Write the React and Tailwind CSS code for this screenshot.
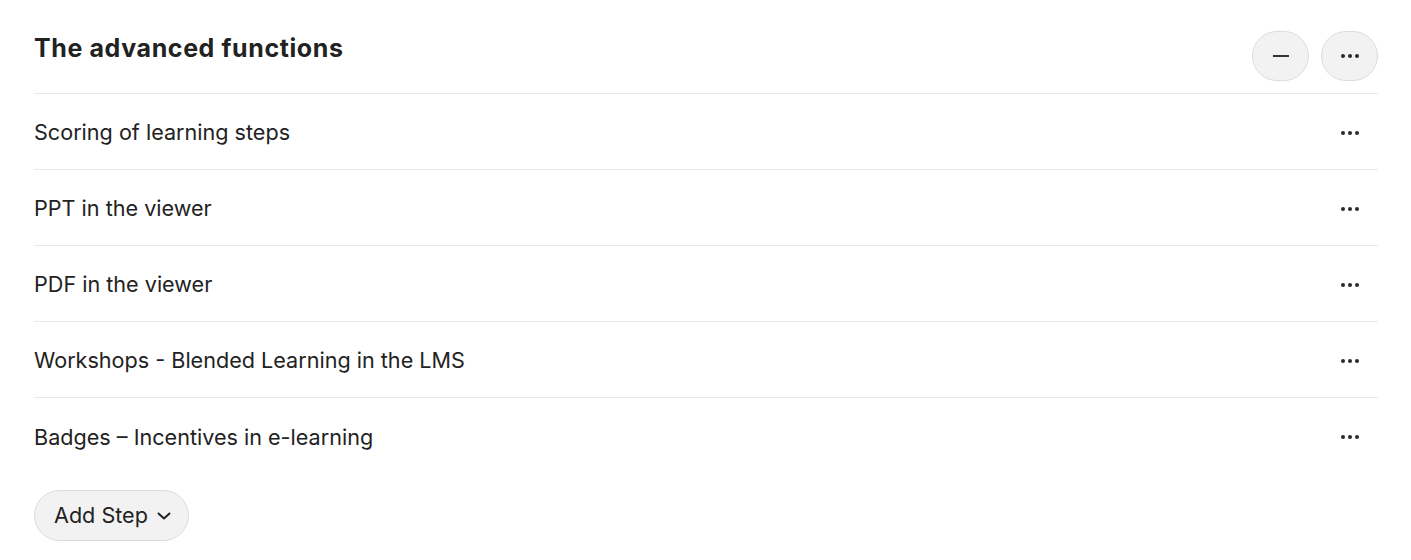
import React from 'react';

const steps = [
  'Scoring of learning steps',
  'PPT in the viewer',
  'PDF in the viewer',
  'Workshops - Blended Learning in the LMS',
  'Badges – Incentives in e-learning',
];

function Dots() {
  return (
    <svg width="18" height="4" viewBox="0 0 18 4" fill="#2a2a2a">
      <circle cx="2" cy="2" r="2" />
      <circle cx="9" cy="2" r="2" />
      <circle cx="16" cy="2" r="2" />
    </svg>
  );
}

export default function App() {
  return (
    <div className="min-h-screen bg-white pl-[34px] pr-[33px] text-[#222] font-['Inter',sans-serif]">
      {/* Header */}
      <div className="flex items-start justify-between pt-[31px] pb-[12px] border-b border-[#e8e8e8]">
        <h2 className="text-[25px] leading-[34px] font-bold tracking-[0.6px]">The advanced functions</h2>
        <div className="flex gap-3">
          <button className="w-[57px] h-[50px] rounded-full bg-[#f2f2f2] border border-[#dcdcdc] flex items-center justify-center">
            <span className="block w-[16px] h-[2px] bg-[#333]" />
          </button>
          <button className="w-[57px] h-[50px] rounded-full bg-[#f2f2f2] border border-[#dcdcdc] flex items-center justify-center">
            <Dots />
          </button>
        </div>
      </div>

      {/* Steps */}
      <div>
        {steps.map((s, i) => (
          <div
            key={s}
            className={`flex items-center justify-between h-[76px] pt-[2px] ${i < steps.length - 1 ? 'border-b border-[#e8e8e8]' : ''}`}
          >
            <span className="text-[21.6px]">{s}</span>
            <span className="w-[57px] flex justify-center">
              <Dots />
            </span>
          </div>
        ))}
      </div>

      <button className="mt-[16px] h-[51px] pl-[19px] pr-[16px] rounded-full bg-[#f2f2f2] border border-[#dcdcdc] flex items-center gap-[8px] text-[21.6px]">
        Add Step
        <svg width="16" height="10" viewBox="0 0 16 10" fill="none" stroke="#222" strokeWidth="2" strokeLinecap="round" strokeLinejoin="round">
          <path d="M2.5 2.5l5.5 5 5.5-5" />
        </svg>
      </button>
    </div>
  );
}
